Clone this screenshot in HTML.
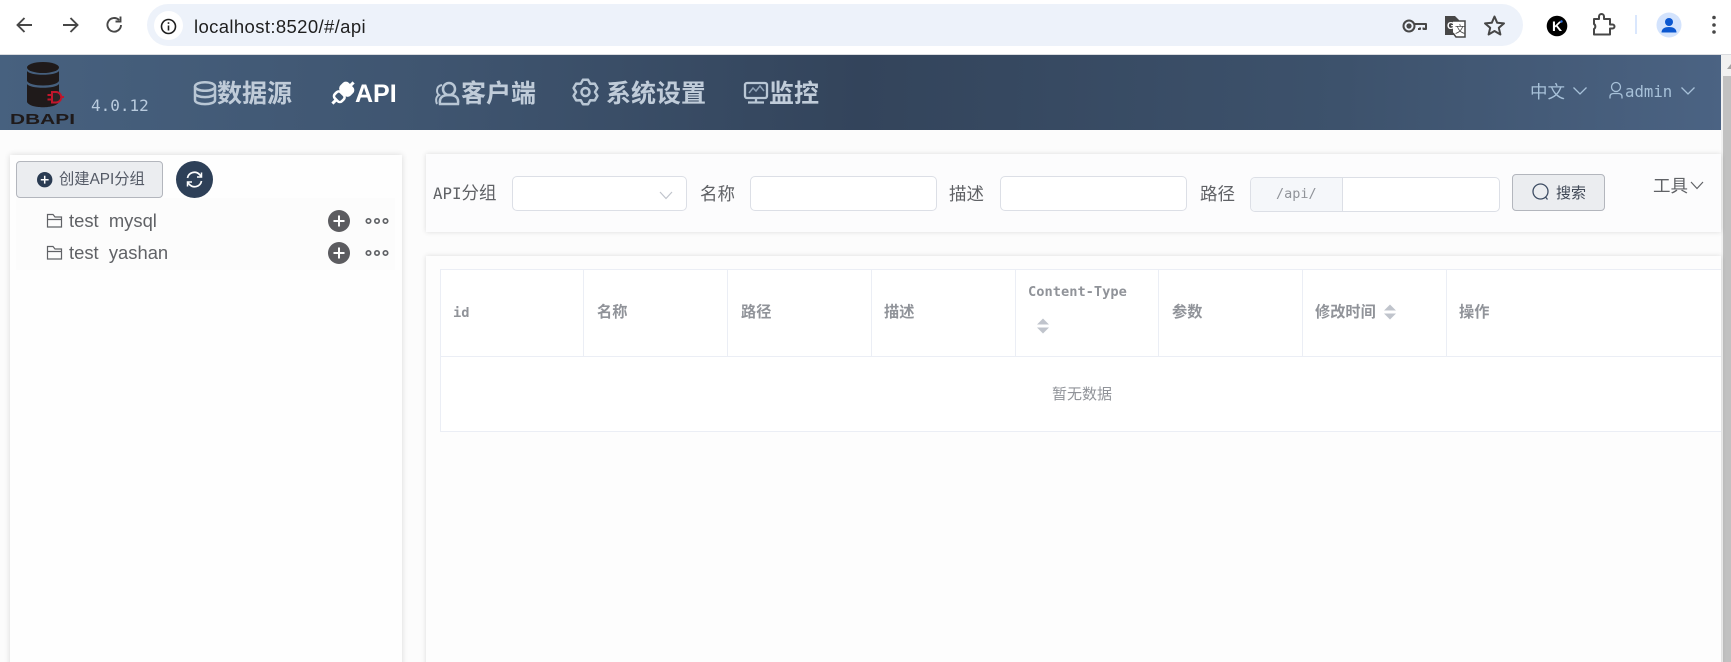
<!DOCTYPE html>
<html lang="zh"><head><meta charset="utf-8"><title>DBAPI</title>
<style>
*{box-sizing:border-box}
html,body{margin:0;padding:0;width:1731px;height:662px;overflow:hidden;background:#fcfcfc}
body{position:relative;font-family:"Liberation Sans","Noto Sans CJK SC",sans-serif}
.a{position:absolute;white-space:pre;line-height:1}
svg{position:absolute;overflow:visible}
.mono{font-family:"DejaVu Sans Mono","Noto Sans CJK SC",monospace}
.nav{font-size:25px;font-weight:700;color:#c0ccd9;top:81px;height:26px;line-height:26px}
.lbl{font-size:17.5px;color:#606266;top:184px;height:20px;line-height:20px}
.inp{position:absolute;background:#fff;border:1px solid #dcdfe6;border-radius:5px}
.th{font-size:15.2px;font-weight:700;color:#909399;height:16px;line-height:16px}
.vl{position:absolute;top:270px;width:1px;height:87px;background:#ebeef5}
</style></head><body>

<!-- browser toolbar -->
<div class="a" style="left:0;top:0;width:1731px;height:55px;background:#fff;border-bottom:1px solid #dadce0"></div>
<svg style="left:0;top:-3px" width="140" height="54" fill="none" stroke="#474747" stroke-width="1.9">
<path d="M32 28H18M24.500 21L17.500 28L24.500 35"/>
<path d="M63 28H77M70.500 21L77.500 28L70.500 35"/>
<path d="M121 28A6.800 6.800 0 1 1 119 23M120.500 19.500V24.500H115.500"/>
</svg>
<div class="a" style="left:147px;top:4px;width:1376px;height:42px;background:#edf2fa;border-radius:21px"></div>
<div class="a" style="left:154px;top:11px;width:29px;height:29px;background:#fff;border-radius:50%"></div>
<svg style="left:160px;top:18px" width="17" height="17" fill="none" stroke="#1f1f1f" stroke-width="1.600"><circle cx="8.500" cy="8.500" r="7"/><path d="M8.500 7.500V12.500M8.500 4.200V5.900"/></svg>
<div class="a" style="left:194px;top:17px;font-size:18.5px;letter-spacing:.37px;height:20px;line-height:20px;color:#1f1f1f">localhost:8520/#/api</div>
<svg style="left:1400px;top:12px" width="330" height="30" fill="none" stroke="#474747" stroke-width="2">
<circle cx="9" cy="14" r="5.500"/><circle cx="9" cy="14" r="1.600" fill="#474747"/><path d="M14.500 12H26V17H23.500V15.500M20 15.500V17H18" stroke-linejoin="round"/>
<path d="M45 4H55L59 8V23H45Z" fill="#474747" stroke="none"/><text x="47" y="17" font-family="Liberation Sans" font-size="10" font-weight="700" fill="#fff" stroke="none">G</text>
<path d="M53 9H65V25H56L53 21" fill="#fff" stroke-width="1.500"/><text x="55" y="21" font-family="Noto Sans CJK SC" font-size="10" fill="#474747" stroke="none">文</text>
<path d="M94.500 4.500L97.200 10.800L104 11.400L98.800 15.800L100.400 22.500L94.500 19L88.600 22.500L90.200 15.800L85 11.400L91.800 10.800Z" stroke-linejoin="round"/>
<circle cx="157" cy="14" r="10.300" fill="#000" stroke="none"/><text x="152" y="19" font-family="Liberation Sans" font-size="14" font-weight="700" fill="#fff" stroke="none">K</text><circle cx="161.500" cy="9.500" r="1.200" fill="#2f6fe0" stroke="none"/>
<path d="M194 7H199V4.500A2.500 2.500 0 0 1 204 4.500V7H210V12.500H212.500A2 2 0 0 1 212.500 16.500H210V22.500H194V17A3 3 0 0 0 194 12Z" stroke-linejoin="round"/>
<path d="M236 3V22" stroke="#d3e3fd" stroke-width="1.700"/>
<circle cx="269" cy="13" r="12.500" fill="#d3e3fd" stroke="none"/><circle cx="269" cy="10" r="4" fill="#0b57d0" stroke="none"/><path d="M261.500 20.500C261.500 16.500 265 15 269 15S276.500 16.500 276.500 20.500Z" fill="#0b57d0" stroke="none"/>
<circle cx="314" cy="5.500" r="1.800" fill="#474747" stroke="none"/><circle cx="314" cy="13" r="1.800" fill="#474747" stroke="none"/><circle cx="314" cy="20" r="1.800" fill="#474747" stroke="none"/>
</svg>

<!-- app nav -->
<div class="a" style="left:0;top:55px;width:1721px;height:75px;background:linear-gradient(92deg,#47617f 0%,#3f5570 25%,#33445b 50%,#3d526c 78%,#4b6383 100%)"></div>
<svg style="left:0;top:55px" width="90" height="75">
<g fill="#1f1a1a"><ellipse cx="43" cy="12.500" rx="16" ry="5.500"/>
<path d="M27 16C30 21 56 21 59 16V26C56 32 30 32 27 26Z"/>
<path d="M27 29C30 34 56 34 59 29V47C56 54 30 54 27 47Z"/></g>
<path d="M47.500 40H52M47.500 44.500H52M52 37H56A5 5 0 0 1 56 47.500H52ZM61 42H64" fill="#2a2426" stroke="#c0162c" stroke-width="2"/>
<text x="10" y="69" font-family="Liberation Sans" font-size="15" font-weight="700" fill="#1f1a1a" textLength="65" lengthAdjust="spacingAndGlyphs">DBAPI</text>
</svg>
<div class="a mono" style="left:91px;top:97px;font-size:16px;height:18px;line-height:18px;color:#b9cbde">4.0.12</div>

<svg style="left:190px;top:78px" width="640" height="30" fill="none" stroke="#b9c7d5" stroke-width="2.500">
<ellipse cx="15" cy="8.500" rx="10" ry="4.300"/><path d="M5 8.500V22C5 27.500 25 27.500 25 22V8.500M5 15C5 20.500 25 20.500 25 15"/>
<g transform="rotate(-45 153 15)" stroke="#fff"><path d="M138 15H143M163 15H168" stroke-width="3"/><rect x="143.500" y="10" width="8.500" height="10" rx="3" stroke-width="2.600"/><rect x="153.500" y="9" width="9.500" height="12" rx="3" fill="#fff"/></g>
<circle cx="259" cy="11" r="6"/><path d="M250 26C249 19 253 17 259 17S269 19 268 26Z"/><path d="M252 7C246 8 246 15 249 17C245 19 246 24 247 26" stroke-width="2"/>
<g transform="translate(395.500 14)"><path d="M-2.600-12.200L2.600-12.200L4.750-8.200L9.300-8.400L11.900-3.900L9.500 0L11.900 3.900L9.300 8.400L4.750 8.200L2.600 12.200L-2.600 12.200L-4.750 8.200L-9.300 8.400L-11.900 3.900L-9.500 0L-11.900-3.900L-9.300-8.400L-4.750-8.200Z" stroke-linejoin="round"/><circle r="4"/></g>
<rect x="555" y="5" width="22" height="15" rx="2" stroke-width="2.300"/><path d="M559 15L563 10L566 13L570 8L574 13" stroke-width="1.500" stroke="#8fa2b6"/><path d="M558 24.500H574M566 20V24.500" stroke-width="2.300"/>
</svg>
<div class="a nav" style="left:217px">数据源</div>
<div class="a nav" style="left:355px;color:#fff">API</div>
<div class="a nav" style="left:461px">客户端</div>
<div class="a nav" style="left:606px">系统设置</div>
<div class="a nav" style="left:769px">监控</div>

<div class="a" style="left:1530px;top:82px;font-size:17.500px;height:20px;line-height:20px;color:#a7c1d9">中文</div>
<div class="a mono" style="left:1625px;top:82px;font-size:15.700px;height:20px;line-height:20px;color:#a7c1d9">admin</div>
<svg style="left:1570px;top:80px" width="130" height="24" fill="none" stroke="#a7c1d9" stroke-width="1.300">
<path d="M3.500 7.500L10 14L16.500 7.500M111.500 7.500L118 14L124.500 7.500"/>
<circle cx="46" cy="7" r="4.500"/><path d="M40 18.500V16.500Q40 13.500 44 13.500H48Q52 13.500 52 16.500V18.500"/>
</svg>

<!-- scrollbar -->
<div class="a" style="left:1721px;top:55px;width:10px;height:607px;background:#f1f1f1"></div>
<div class="a" style="left:1723px;top:76px;width:8px;height:586px;background:#c1c1c1"></div>
<div class="a" style="left:1727px;top:64px;border-left:4px solid transparent;border-right:4px solid transparent;border-bottom:5px solid #a3a3a3"></div>

<!-- left panel -->
<div class="a" style="left:10px;top:155px;width:392px;height:520px;background:#fefefe;box-shadow:0 0 6px rgba(0,0,0,.14)"></div>
<div class="a" style="left:16px;top:198px;width:379px;height:72px;background:#fcfcfc"></div>
<div class="a" style="left:16px;top:161px;width:147px;height:37px;background:#ebedf0;border:1px solid #b3b6bd;border-radius:4px"></div>
<svg style="left:37px;top:172px" width="16" height="16"><circle cx="7.700" cy="7.700" r="7.700" fill="#2a3b52"/><path d="M7.700 3.800V11.600M3.800 7.700H11.600" stroke="#fff" stroke-width="1.500"/></svg>
<div class="a" style="left:59px;top:171px;font-size:15.300px;height:18px;line-height:18px;color:#535965">创建API分组</div>
<div class="a" style="left:176px;top:161px;width:37px;height:37px;border-radius:50%;background:#2e4058"></div>
<svg style="left:186px;top:171px" width="17" height="17" fill="none" stroke="#fff" stroke-width="1.700"><path d="M1.500 7A7 7 0 0 1 13.500 3.500L15.500 5.500M15.500 10A7 7 0 0 1 3.500 13.500L1.500 11.500"/><path d="M15.500 1.500V6H11M1.500 15.500V11H6" stroke-width="1.500"/></svg>

<svg style="left:46px;top:212px" width="350" height="52" fill="none" stroke="#606266" stroke-width="1.200">
<path d="M1.500 15V2.500H7L9 5H15.500V15ZM1.500 7.500H15.500"/>
<path d="M1.500 47V34.500H7L9 37H15.500V47ZM1.500 39.500H15.500"/>
<g fill="#5c5c60" stroke="none"><circle cx="293" cy="9" r="11"/><circle cx="293" cy="41" r="11"/></g>
<path d="M293 3.500V14.500M287.500 9H298.500M293 35.500V46.500M287.500 41H298.500" stroke="#fff" stroke-width="2"/>
<g stroke-width="1.700"><circle cx="322.500" cy="9" r="2.200"/><circle cx="331" cy="9" r="2.200"/><circle cx="339.500" cy="9" r="2.200"/><circle cx="322.500" cy="41" r="2.200"/><circle cx="331" cy="41" r="2.200"/><circle cx="339.500" cy="41" r="2.200"/></g>
</svg>
<div class="a" style="left:69px;top:210px;font-size:18.400px;height:22px;line-height:22px;color:#606266">test  mysql</div>
<div class="a" style="left:69px;top:242px;font-size:18.400px;height:22px;line-height:22px;color:#606266">test  yashan</div>

<!-- search panel -->
<div class="a" style="left:426px;top:154px;width:1295px;height:78px;background:#fcfcfd;box-shadow:0 0 5px rgba(0,0,0,.13)"></div>
<div class="a lbl" style="left:433px;font-family:'DejaVu Sans Mono','Noto Sans CJK SC',monospace;font-size:15.800px">API<span style="font-size:17.500px">分组</span></div>
<div class="inp" style="left:512px;top:176px;width:175px;height:35px"></div>
<svg style="left:658px;top:187px" width="16" height="16" fill="none" stroke="#c0c4cc" stroke-width="1.200"><path d="M2 5L8 11.500L14 5"/></svg>
<div class="a lbl" style="left:700px">名称</div>
<div class="inp" style="left:750px;top:176px;width:187px;height:35px"></div>
<div class="a lbl" style="left:949px">描述</div>
<div class="inp" style="left:1000px;top:176px;width:187px;height:35px"></div>
<div class="a lbl" style="left:1200px">路径</div>
<div class="inp" style="left:1250px;top:177px;width:250px;height:35px"></div>
<div class="a" style="left:1251px;top:178px;width:92px;height:33px;background:#f5f7fa;border-right:1px solid #dcdfe6;border-radius:4px 0 0 4px"></div>
<div class="a mono" style="left:1276px;top:186px;font-size:13.500px;height:16px;line-height:16px;color:#909399">/api/</div>
<div class="a" style="left:1512px;top:174px;width:93px;height:37px;background:#ebedf0;border:1px solid #b3b6bd;border-radius:4px"></div>
<svg style="left:1532px;top:183px" width="18" height="18" fill="none" stroke="#3d4c63" stroke-width="1.300"><circle cx="8.500" cy="8.500" r="7.500"/><path d="M13.500 14L15.500 16.500"/></svg>
<div class="a" style="left:1556px;top:185px;font-size:15px;height:18px;line-height:18px;color:#3f4755">搜索</div>
<div class="a" style="left:1653px;top:176px;font-size:17.500px;height:20px;line-height:20px;color:#606266">工具</div>
<svg style="left:1689px;top:179px" width="16" height="14" fill="none" stroke="#606266" stroke-width="1.200"><path d="M2 3L8 9.500L14 3"/></svg>

<!-- table panel -->
<div class="a" style="left:426px;top:256px;width:1295px;height:420px;background:#fdfdfd;box-shadow:0 0 5px rgba(0,0,0,.13)"></div>
<div class="a" style="left:440px;top:269px;width:1281px;height:163px;background:#fff;border-top:1px solid #ebeef5;border-left:1px solid #ebeef5;border-bottom:1px solid #ebeef5"></div>
<div class="a" style="left:441px;top:356px;width:1280px;height:1px;background:#ebeef5"></div>
<div class="vl" style="left:583px"></div><div class="vl" style="left:727px"></div><div class="vl" style="left:871px"></div><div class="vl" style="left:1015px"></div><div class="vl" style="left:1158px"></div><div class="vl" style="left:1302px"></div><div class="vl" style="left:1446px"></div>
<div class="a th mono" style="left:453px;top:305px;font-size:13.700px">id</div>
<div class="a th" style="left:597px;top:305px">名称</div>
<div class="a th" style="left:741px;top:305px">路径</div>
<div class="a th" style="left:884px;top:305px">描述</div>
<div class="a th mono" style="left:1028px;top:284px;font-size:13.700px">Content-Type</div>
<div class="a th" style="left:1172px;top:305px">参数</div>
<div class="a th" style="left:1315px;top:305px">修改时间</div>
<div class="a th" style="left:1459px;top:305px">操作</div>
<svg style="left:1036px;top:318px" width="14" height="16" fill="#c0c4cc"><path d="M7 0.500L13 6.500H1ZM1 9.500H13L7 15.500Z"/></svg>
<svg style="left:1383px;top:304px" width="14" height="16" fill="#c0c4cc"><path d="M7 0.500L13 6.500H1ZM1 9.500H13L7 15.500Z"/></svg>
<div class="a" style="left:1052px;top:386px;font-size:15px;height:18px;line-height:18px;color:#909399">暂无数据</div>
</body></html>
